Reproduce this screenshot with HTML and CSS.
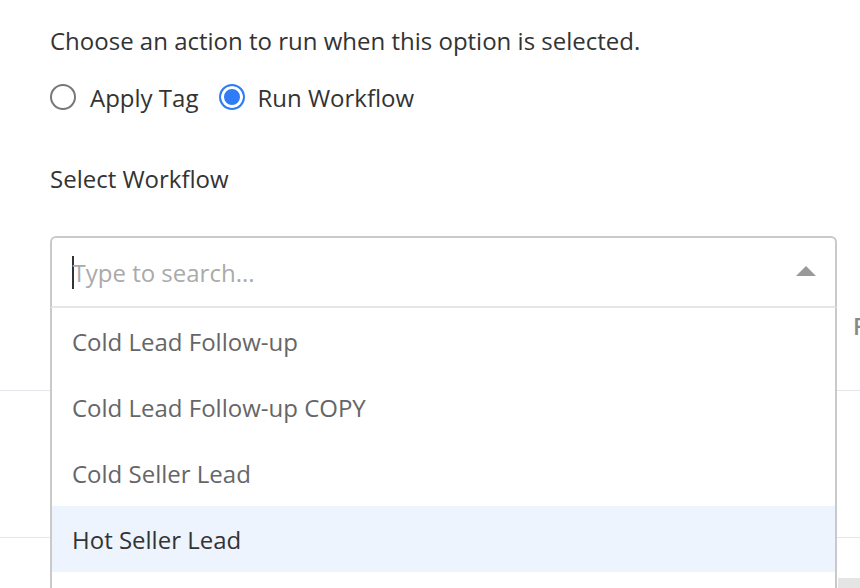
FILE: index.html
```html
<!DOCTYPE html>
<html lang="en">
<head>
<meta charset="utf-8">
<title>Run Workflow</title>
<link rel="stylesheet" href="styles.css">
</head>
<body>
<div class="page">
  <div class="form">
    <p class="intro">Choose an action to run when this option is selected.</p>
    <div class="radios">
      <label class="radio"><span class="dot"></span><span>Apply Tag</span></label>
      <label class="radio"><span class="dot checked"></span><span>Run Workflow</span></label>
    </div>
    <div class="field-label">Select Workflow</div>
    <div class="combo">
      <div class="combo-input">
        <span class="caret"></span>
        <span class="placeholder">Type to search...</span>
        <span class="arrow"></span>
      </div>
      <ul class="menu">
        <li class="item">Cold Lead Follow-up</li>
        <li class="item">Cold Lead Follow-up COPY</li>
        <li class="item">Cold Seller Lead</li>
        <li class="item active">Hot Seller Lead</li>
      </ul>
    </div>
  </div>
  <div class="backdrop">
    <div class="row row-head"><span class="head-text">F</span></div>
    <div class="row row-body"></div>
    <div class="foot"></div>
  </div>
</div>
</body>
</html>
```

FILE: styles.css
```css
html, body {
  margin: 0;
  padding: 0;
  background: #fff;
}
body {
  font-family: "Open Sans", "Liberation Sans", sans-serif;
  color: #333;
  overflow: hidden;
}
.page {
  width: 860px;
  height: 588px;
  overflow: hidden;
  position: relative;
}
.form {
  padding: 23px 23px 0 50px;
}
.intro {
  margin: 0;
  font-size: 24px;
  line-height: 36px;
  color: #333;
}
.radios {
  display: flex;
  align-items: center;
  margin-top: 20px;
  height: 36px;
  font-size: 24px;
}
.radio {
  display: flex;
  align-items: center;
  gap: 14px;
  margin-right: 21px;
  color: #333;
}
.radio + .radio {
  gap: 12px;
}
.dot {
  box-sizing: border-box;
  width: 26px;
  height: 26px;
  border-radius: 50%;
  border: 2px solid #777;
  background: #fff;
}
.dot.checked {
  border-color: #2f7cf6;
  background: #2f7cf6;
  box-shadow: inset 0 0 0 3px #fff;
}
.field-label {
  margin-top: 46px;
  font-size: 24px;
  line-height: 36px;
  color: #333;
}
.combo {
  position: relative;
  margin-top: 39px;
  z-index: 2;
}
.combo-input {
  box-sizing: border-box;
  height: 72px;
  border: 2px solid #c9c9c9;
  border-bottom: 2px solid #e6e6e6;
  border-radius: 6px 6px 0 0;
  display: flex;
  align-items: center;
  padding: 0 19px 0 20px;
  background: #fff;
}
.caret {
  width: 1.5px;
  height: 33px;
  background: #333;
  margin-right: -1px;
}
.placeholder {
  flex: 1;
  font-size: 24px;
  color: #aaa;
}
.arrow {
  width: 0;
  height: 0;
  border-left: 10px solid transparent;
  border-right: 10px solid transparent;
  border-bottom: 10px solid #999;
  margin-top: -2px;
}
.menu {
  position: absolute;
  top: 100%;
  left: 0;
  right: 0;
  margin: 0;
  padding: 0 0 40px;
  list-style: none;
  background: #fff;
  border-left: 2px solid #c9c9c9;
  border-right: 2px solid #c9c9c9;
}
.item {
  height: 66px;
  display: flex;
  align-items: center;
  padding-left: 20px;
  font-size: 24px;
  color: #666;
}
.item.active {
  background: #edf4fe;
  color: #333;
}
.backdrop {
  position: relative;
  z-index: 1;
}
.row {
  border-bottom: 1.5px solid #e3e6ea;
}
.row-head {
  height: 83px;
  padding-left: 853px;
  white-space: nowrap;
  box-sizing: border-box;
  padding-top: 7px;
}
.head-text {
  font-size: 23px;
  font-weight: 600;
  color: #888;
  line-height: 1;
}
.row-body {
  height: 146px;
}
.foot {
  margin-top: 40px;
  margin-left: 838px;
  height: 20px;
  background: #e5e5e5;
}
```
